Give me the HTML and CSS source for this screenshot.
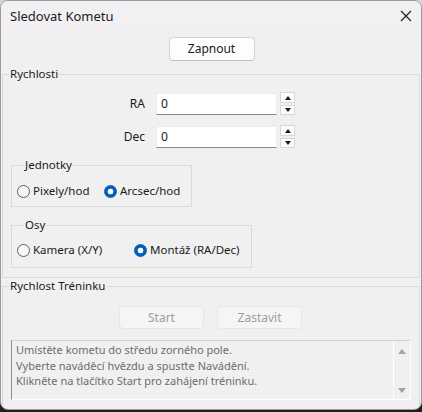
FILE: index.html
```html
<!DOCTYPE html>
<html lang="cs">
<head>
<meta charset="utf-8">
<title>Sledovat Kometu</title>
<link rel="stylesheet" href="styles.css">
</head>
<body>
<div class="window">
  <div class="titlebar">
    <span class="title">Sledovat Kometu</span>
    <svg class="close" width="12" height="12" viewBox="0 0 12 12" aria-label="Zavřít"><path d="M1 1 L11 11 M11 1 L1 11" stroke="#1b1b1b" stroke-width="1.1" fill="none"/></svg>
  </div>
  <div class="body">
    <div class="top-row"><button class="btn">Zapnout</button></div>

    <fieldset class="group speeds">
      <legend>Rychlosti</legend>
      <div class="field-row">
        <span class="field-label">RA</span>
        <div class="input">0</div>
        <div class="spin">
          <span class="spin-btn"><i class="tri up"></i></span>
          <span class="spin-btn"><i class="tri down"></i></span>
        </div>
      </div>
      <div class="field-row">
        <span class="field-label">Dec</span>
        <div class="input">0</div>
        <div class="spin">
          <span class="spin-btn"><i class="tri up"></i></span>
          <span class="spin-btn"><i class="tri down"></i></span>
        </div>
      </div>

      <fieldset class="sub units">
        <legend>Jednotky</legend>
        <div class="radios">
          <span class="radio"><span class="dot"></span>Pixely/hod</span>
          <span class="radio checked"><span class="dot"></span>Arcsec/hod</span>
        </div>
      </fieldset>

      <fieldset class="sub axes">
        <legend>Osy</legend>
        <div class="radios">
          <span class="radio"><span class="dot"></span>Kamera (X/Y)</span>
          <span class="radio checked"><span class="dot"></span>Montáž (RA/Dec)</span>
        </div>
      </fieldset>
    </fieldset>

    <fieldset class="group training">
      <legend>Rychlost Tréninku</legend>
      <div class="btn-row">
        <button class="btn" disabled>Start</button>
        <button class="btn" disabled>Zastavit</button>
      </div>
      <div class="log">
        <div class="log-text">Umístěte kometu do středu zorného pole.<br>Vyberte naváděcí hvězdu a spusťte Navádění.<br>Klikněte na tlačítko Start pro zahájení tréninku.</div>
        <div class="log-scroll"><i class="stri up"></i><i class="stri down"></i></div>
      </div>
    </fieldset>
  </div>
</div>
</body>
</html>
```

FILE: styles.css
```css
* { box-sizing: border-box; }

html, body {
  margin: 0;
  padding: 0;
}

body {
  width: 422px;
  height: 412px;
  background: linear-gradient(#d4d4d4 0, #d4d4d4 50%, #1d1f22 50%, #1d1f22 100%);
  font-family: "Noto Sans", "Liberation Sans", sans-serif;
  font-size: 11.5px;
  color: #1a1a1a;
}

.window {
  width: 422px;
  height: 410px;
  border: 1px solid #9a9a9a;
  border-radius: 8px;
  overflow: hidden;
  background: #f0f0f0;
  display: flex;
  flex-direction: column;
}

.titlebar {
  height: 30px;
  flex: none;
  background: #f3f0f3;
  display: flex;
  align-items: center;
  justify-content: space-between;
  padding: 0 9px 0 9px;
}

.title {
  font-size: 13px;
  color: #1a1a1a;
}

.close {
  display: block;
  margin-top: -1px;
}

.body {
  flex: 1;
  display: flex;
  flex-direction: column;
}

.top-row {
  display: flex;
  justify-content: center;
  margin-top: 6px;
  padding-left: 1px;
}

.btn {
  font-family: inherit;
  font-size: 12px;
  width: 86px;
  height: 24px;
  background: #fdfdfd;
  border: 1px solid #d2d2d2;
  border-bottom-color: #c2c2c2;
  border-radius: 4px;
  color: #1a1a1a;
  padding: 0;
  line-height: 20px;
}

.btn:disabled {
  background: #f5f5f5;
  border-color: #e6e6e6;
  color: #9d9d9d;
  width: 85px;
  height: 23px;
}

fieldset {
  margin: 0;
  padding: 0;
  min-width: 0;
  border: 1px solid #dadada;
}

legend {
  padding: 0 1px;
  line-height: 16px;
  height: 16px;
}

.group {
  margin: 5px 1px 0 1px;
}

.group > legend {
  margin-left: 6px;
}

.speeds {
  padding-bottom: 9px;
}

.field-row {
  display: flex;
  align-items: flex-start;
  margin-top: 11px;
  height: 22px;
}

.field-label {
  width: 142px;
  text-align: right;
  line-height: 21px;
  font-size: 12px;
}

.input {
  width: 121px;
  height: 22px;
  margin-left: 11px;
  background: #ffffff;
  border: 1px solid #ececec;
  border-bottom: 1px solid #868686;
  padding-left: 4px;
  line-height: 20px;
  font-size: 12px;
}

.spin {
  margin-left: 3px;
  margin-top: -1px;
  display: flex;
  flex-direction: column;
  gap: 2px;
}

.spin-btn {
  width: 15px;
  height: 11px;
  background: #fbfbfb;
  border: 1px solid #d6d6d6;
  display: flex;
  align-items: center;
  justify-content: center;
}

.spin-btn + .spin-btn {
  height: 10px;
}

.tri {
  width: 0;
  height: 0;
  border-left: 3.5px solid transparent;
  border-right: 3.5px solid transparent;
}

.tri.up { border-bottom: 4px solid #1a1a1a; }
.tri.down { border-top: 4px solid #1a1a1a; }

.sub {
  margin-left: 8px;
}

.sub > legend {
  margin-left: 7px;
}

.units {
  width: 181px;
  margin-top: 9px;
  padding: 10px 0 7px 5px;
}

.units .radios {
  grid-template-columns: 87px auto;
}

.axes {
  width: 241px;
  margin-top: 10px;
  padding: 9px 0 9px 5px;
}

.axes .radios {
  grid-template-columns: 117px auto;
}

.radios {
  display: grid;
  height: 16px;
  align-items: center;
}

.radio {
  display: flex;
  align-items: center;
  gap: 3px;
  line-height: 16px;
  white-space: nowrap;
}

.dot {
  width: 13px;
  height: 13px;
  border-radius: 50%;
  border: 1px solid #5f5f5f;
  background: #f7f7f7;
  flex: none;
}

.radio.checked .dot {
  border-color: #005fb8;
  background: radial-gradient(circle, #ffffff 0, #ffffff 2.6px, #005fb8 3.2px);
}

.training {
  margin-top: 0;
  border-bottom: none;
  flex: 1;
}

.btn-row {
  display: flex;
  justify-content: center;
  gap: 13px;
  margin-top: 12px;
  padding-right: 1px;
}

.log {
  margin: 11px 0 0 8px;
  width: 400px;
  height: 60px;
  display: flex;
  border: 1px solid #ffffff;
  border-top-color: #d2d2d2;
  border-left-color: #8e8e8e;
}

.log-text {
  flex: 1;
  padding: 1px 0 0 4px;
  color: #6d6d6d;
  font-size: 11px;
  line-height: 15.5px;
  white-space: nowrap;
}

.log-scroll {
  width: 17px;
  border-left: 1px solid #ffffff;
  display: flex;
  flex-direction: column;
  justify-content: space-between;
  align-items: center;
  padding: 8px 0 6px 0;
}

.stri {
  width: 0;
  height: 0;
  border-left: 4px solid transparent;
  border-right: 4px solid transparent;
}

.stri.up { border-bottom: 5px solid #a3a3a3; }
.stri.down { border-top: 5px solid #a3a3a3; }
```
